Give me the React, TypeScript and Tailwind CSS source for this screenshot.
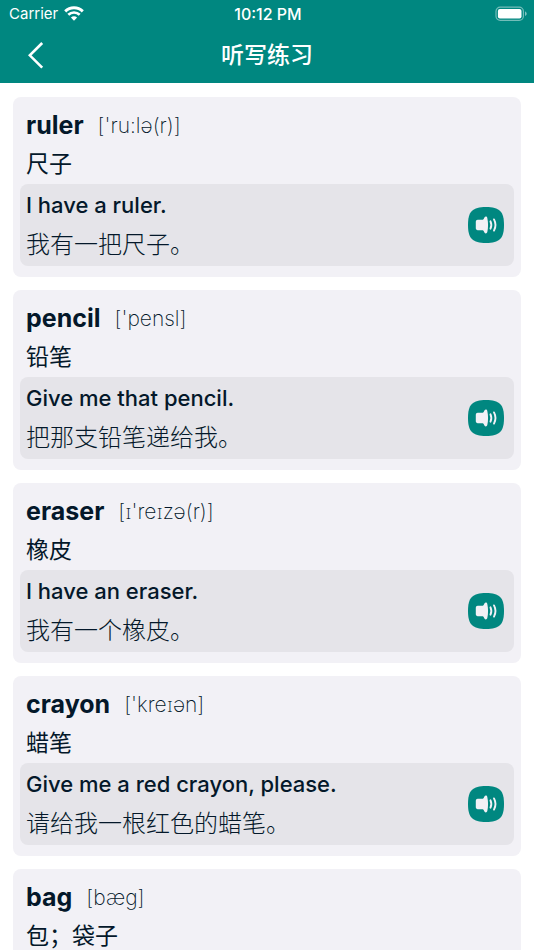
interface Word {
  word: string;
  phonetic: string;
  meaning: string;
  sentence: string;
  translation: string;
}

const words: Word[] = [
  {
    word: 'ruler',
    phonetic: "['ru:lə(r)]",
    meaning: '尺子',
    sentence: 'I have a ruler.',
    translation: '我有一把尺子。',
  },
  {
    word: 'pencil',
    phonetic: "['pensl]",
    meaning: '铅笔',
    sentence: 'Give me that pencil.',
    translation: '把那支铅笔递给我。',
  },
  {
    word: 'eraser',
    phonetic: "[ɪ'reɪzə(r)]",
    meaning: '橡皮',
    sentence: 'I have an eraser.',
    translation: '我有一个橡皮。',
  },
  {
    word: 'crayon',
    phonetic: "['kreɪən]",
    meaning: '蜡笔',
    sentence: 'Give me a red crayon, please.',
    translation: '请给我一根红色的蜡笔。',
  },
  {
    word: 'bag',
    phonetic: '[bæg]',
    meaning: '包；袋子',
    sentence: 'I have a bag.',
    translation: '我有一个包。',
  },
];

function WifiIcon() {
  return (
    <svg className="h-4 w-5" viewBox="0 0 20 16" fill="none" aria-hidden="true">
      <path d="M1.2 5.4a12.6 12.6 0 0 1 17.6 0" stroke="white" strokeWidth="2.9" />
      <path d="M4.3 8.8a8.2 8.2 0 0 1 11.4 0" stroke="white" strokeWidth="2.7" />
      <path d="M10 14.8 6.9 11.6a4.5 4.5 0 0 1 6.2 0Z" fill="white" />
    </svg>
  );
}

function BatteryIcon() {
  return (
    <svg className="h-4 w-8" viewBox="0 0 32 16" fill="none" aria-hidden="true">
      <rect x="1" y="1.2" width="27.4" height="13.2" rx="4.2" stroke="white" strokeOpacity="0.45" strokeWidth="1.2" />
      <rect x="2.9" y="3.1" width="23.6" height="9.4" rx="2" fill="white" />
      <path d="M30 5.6c1.1.4 1.7 1.2 1.7 2.2s-.6 1.8-1.7 2.2Z" fill="white" fillOpacity="0.5" />
    </svg>
  );
}

function SpeakerIcon() {
  return (
    <svg className="size-9" viewBox="0 0 36 36" fill="none" aria-hidden="true">
      <path
        d="M18 0C31.5 0 36 4.5 36 18S31.5 36 18 36 0 31.5 0 18 4.5 0 18 0Z"
        fill="#008780"
      />
      <path
        d="M9.7 12.8h4.5c.8 0 1.2-.3 1.6-1l.6-1.2c.9-1.5 2.5-1.2 2.9.3 1 4.6 1 9.6 0 14.2-.4 1.5-2 1.8-2.9.3l-.6-1.2c-.4-.7-.8-1-1.6-1H9.7c-1.1 0-1.9-.8-1.9-1.9v-6.6c0-1.1.8-1.9 1.9-1.9Z"
        fill="#f2f1f6"
      />
      <path d="M22.5 14.3c1.1 2.4 1.1 5 0 7.4" stroke="#f2f1f6" strokeWidth="1.9" strokeLinecap="round" />
      <path d="M26 12.4c1.9 3.6 1.9 7.6 0 11.2" stroke="#f2f1f6" strokeWidth="1.9" strokeLinecap="round" />
    </svg>
  );
}

function WordCard({ item }: { item: Word }) {
  return (
    <li className="rounded-lg bg-[#f2f1f6] px-[7px] pt-[9px] pb-[11px]">
      <div className="px-[6px]">
        <div className="flex items-center gap-[14px] leading-[39px]">
          <h2 className="text-[25px] font-bold">{item.word}</h2>
          <span className="font-['Inter','Open_Sans','Noto_Sans',sans-serif] text-[21px] font-extralight">
            {item.phonetic}
          </span>
        </div>
        <p className="text-[23px] leading-[39px]">{item.meaning}</p>
      </div>

      <div className="flex items-center justify-between rounded-lg bg-[#e5e4e9] py-[2px] pr-[10px] pl-[6px]">
        <div className="leading-[39px]">
          <p className="text-[22px] font-medium">{item.sentence}</p>
          <p className="text-[24px] font-light">{item.translation}</p>
        </div>
        <button type="button" aria-label={`Play ${item.word}`} className="shrink-0">
          <SpeakerIcon />
        </button>
      </div>
    </li>
  );
}

export default function App() {
  return (
    <div className="min-h-screen bg-white font-['Inter','Noto_Sans_CJK_SC',sans-serif] text-[#04182a]">
      <header className="bg-[#008780] text-white">
        {/* Status bar */}
        <div className="grid h-7 grid-cols-3 items-center pr-[7px] pl-[9px] text-[15px]">
          <div className="flex items-center gap-[6px]">
            <span>Carrier</span>
            <WifiIcon />
          </div>
          <span className="text-center text-[16px] font-medium">10:12 PM</span>
          <div className="flex justify-end">
            <BatteryIcon />
          </div>
        </div>

        {/* Nav bar */}
        <div className="grid h-[55px] grid-cols-3 items-center px-6">
          <button type="button" aria-label="Back" className="flex size-6 items-center justify-center">
            <svg className="h-7 w-4" viewBox="0 0 16 28" fill="none" aria-hidden="true">
              <path d="M14.2 1 1.8 13.3l12.4 12.3" stroke="white" strokeWidth="2.6" />
            </svg>
          </button>
          <h1 className="text-center text-[23px] font-medium">听写练习</h1>
        </div>
      </header>

      <ul className="flex flex-col gap-[13px] px-[13px] pt-[14px] pb-6">
        {words.map((item) => (
          <WordCard key={item.word} item={item} />
        ))}
      </ul>
    </div>
  );
}
